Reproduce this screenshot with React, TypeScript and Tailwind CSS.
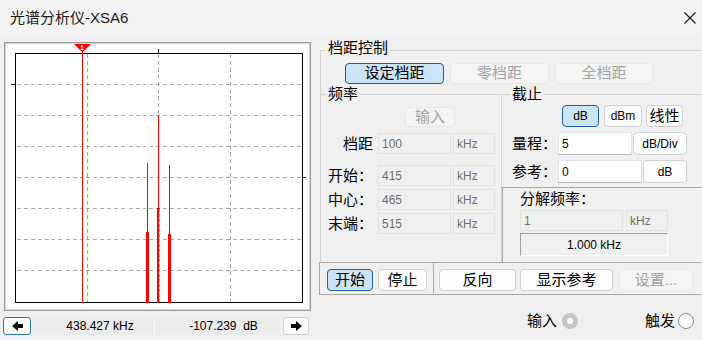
import React from 'react';

const SANS = "font-[family-name:'Liberation_Sans','Noto_Sans_CJK_SC',sans-serif]";

export default function App() {
  return (
    <div className={`w-[702px] h-[340px] bg-[#f0f0f0] flex flex-col overflow-hidden text-black ${SANS}`}>
      {/* Title bar */}
      <div className="h-[36px] bg-[#f3f3f3] flex items-center justify-between pl-[10px] pr-[6px] shrink-0">
        <span className="text-[15px] text-[#1b1b1b]">光谱分析仪-XSA6</span>
        <svg width="12" height="12" viewBox="0 0 12 12">
          <path d="M0.5 0.5 L11.5 11.5 M11.5 0.5 L0.5 11.5" stroke="#1b1b1b" strokeWidth="1.1" />
        </svg>
      </div>

      <div className="flex flex-1">
        {/* Left: plot */}
        <div className="w-[320px] shrink-0 pl-[3px] pt-[6px] flex flex-col">
          <div className="ml-[1px] w-[307px] h-[269px] border border-[#9a9a9a] shadow-[inset_0_0_0_1px_#d6d6d6] bg-white p-[1px]">
            <Plot />
          </div>
          <div className="mt-[6px] flex h-[18px] text-[12px]">
            <div className="w-[28px] h-[18px] border border-[#2f73b5] rounded-[3px] bg-[#fbfbfb] flex items-center justify-center">
              <Arrow dir="left" />
            </div>
            <div className="ml-[1px] w-[123px] pl-[14px] bg-[#ebebeb] border-r border-[#fafafa] flex items-center justify-center">
              438.427 kHz
            </div>
            <div className="w-[125px] pl-[12px] bg-[#ebebeb] flex items-center justify-center whitespace-pre">
              -107.239  dB
            </div>
            <div className="ml-[3px] w-[26px] h-[18px] border border-[#d2d2d2] rounded-[3px] bg-[#fbfbfb] flex items-center justify-center">
              <Arrow dir="right" />
            </div>
          </div>
        </div>

        {/* Right: controls */}
        <div className="flex-1 flex flex-col pt-[14px]">
          <div className="h-[212px] border-t border-l border-[#d5d5d5] flex flex-col">
            <div className="-mt-[13px] ml-[5px] px-[2px] self-start h-[20px] leading-[20px] text-[15px] bg-[#f0f0f0]">档距控制</div>
            <div className="mt-[5px] flex gap-[6px] pl-[24px] text-[15px]">
              <Btn label="设定档距" kind="sel" className="w-[99px] h-[21px]" />
              <Btn label="零档距" kind="dis" className="w-[99px] h-[21px]" />
              <Btn label="全档距" kind="dis" className="w-[98px] h-[21px]" />
            </div>

            <div className="mt-[10px] flex flex-1">
              {/* 频率 */}
              <div className="w-[180px] border-t border-[#d5d5d5] flex flex-col">
                <div className="-mt-[11px] ml-[5px] px-[2px] self-start h-[20px] leading-[20px] text-[15px] bg-[#f0f0f0]">频率</div>
                <Btn label="输入" kind="dis" className="mt-[3px] ml-[84px] w-[50px] h-[20px] text-[15px]" />
                <div className="mt-[6px] flex h-[21px]">
                  <div className="w-[57px] pr-[5px] text-right text-[15px] leading-[21px]">档距</div>
                  <Field value="100" className="w-[73px]" dis />
                  <Field value="kHz" className="ml-[2px] w-[42px]" dis />
                </div>
                <FreqRow label="开始：" value="415" className="mt-[11px]" />
                <FreqRow label="中心：" value="465" className="mt-[3px]" />
                <FreqRow label="末端：" value="515" className="mt-[3px]" />
              </div>

              {/* 截止 */}
              <div className="flex-1 border-t border-l border-[#d5d5d5] flex flex-col">
                <div className="-mt-[11px] ml-[8px] px-[2px] self-start h-[20px] leading-[20px] text-[15px] bg-[#f0f0f0]">截止</div>
                <div className="mt-[1px] pl-[60px] flex">
                  <Btn label="dB" kind="sel" className="w-[37px] h-[22px] text-[12px]" />
                  <Btn label="dBm" className="ml-[5px] w-[38px] h-[22px] text-[12px]" />
                  <Btn label="线性" className="ml-[4px] w-[37px] h-[22px] text-[15px]" />
                </div>
                <div className="mt-[5px] flex h-[23px]">
                  <div className="ml-[10px] w-[46px] text-[15px] leading-[23px]">量程：</div>
                  <Field value="5" className="w-[74px]" />
                  <Btn label="dB/Div" className="ml-[1px] w-[54px] h-[23px] text-[12px] rounded-[2px]" />
                </div>
                <div className="mt-[5px] flex h-[23px]">
                  <div className="ml-[10px] w-[46px] text-[15px] leading-[23px]">参考：</div>
                  <Field value="0" className="w-[84px]" />
                  <Btn label="dB" className="ml-[1px] w-[44px] h-[23px] text-[12px] rounded-[2px]" />
                </div>
                <div className="mt-[4px] flex-1 border-t border-l border-[#a8a8a8] flex flex-col pl-[17px]">
                  <div className="mt-[1px] h-[20px] leading-[20px] text-[15px]">分解频率：</div>
                  <div className="mt-[1px] flex h-[21px]">
                    <Field value="1" className="w-[103px]" dis />
                    <Field value="kHz" className="ml-[3px] w-[42px]" dis />
                  </div>
                  <div className="mt-[2px] w-[148px] h-[23px] border border-t-[#a0a0a0] border-l-[#a0a0a0] border-b-white border-r-white flex items-center justify-center text-[12px]">
                    1.000 kHz
                  </div>
                </div>
              </div>
            </div>
          </div>

          {/* Button strip */}
          <div className="-ml-[1px] h-[33px] border-t border-b border-l border-[#a8a8a8] flex text-[15px]">
            <div className="w-[114px] border-r border-[#a8a8a8] pl-[7px] pt-[6px] flex">
              <Btn label="开始" kind="sel" className="w-[46px] h-[22px]" />
              <Btn label="停止" className="ml-[5px] w-[49px] h-[22px]" />
            </div>
            <div className="pl-[5px] pt-[6px] flex">
              <Btn label="反向" className="w-[77px] h-[22px]" />
              <Btn label="显示参考" className="ml-[4px] w-[93px] h-[22px]" />
              <Btn label="设置..." kind="dis" className="ml-[6px] w-[74px] h-[22px]" />
            </div>
          </div>

          <div className="mt-[18px] h-[16px] flex items-center pl-[207px] text-[15px]">
            <span className="w-[30px] leading-[16px]">输入</span>
            <div className="ml-[5px] w-[16px] h-[16px] rounded-full bg-[#c6c6c6] flex items-center justify-center">
              <div className="w-[6px] h-[6px] rounded-full bg-white" />
            </div>
            <span className="ml-[67px] w-[30px] leading-[16px]">触发</span>
            <div className="ml-[3px] w-[16px] h-[16px] rounded-full border border-[#8a8a8a] bg-white" />
          </div>
        </div>
      </div>
    </div>
  );
}

function FreqRow({ label, value, className = '' }: { label: string; value: string; className?: string }) {
  return (
    <div className={`flex h-[21px] ${className}`}>
      <div className="w-[57px] pl-[7px] text-[15px] leading-[21px]">{label}</div>
      <Field value={value} className="w-[73px]" dis />
      <Field value="kHz" className="ml-[2px] w-[42px]" dis />
    </div>
  );
}

function Field({ value, className = '', dis = false }: { value: string; className?: string; dis?: boolean }) {
  const look = dis
    ? 'bg-[#f0f0f0] border-[#e2e2e2] text-[#6e6e6e]'
    : 'bg-white border-[#e4e4e4] border-b-[#bdbdbd] text-black';
  return (
    <div className={`h-full border ${look} pl-[3px] flex items-center text-[12px] ${className}`}>
      {value}
    </div>
  );
}

function Btn({ label, kind = 'norm', className = '' }: {
  label: string;
  kind?: 'sel' | 'norm' | 'dis';
  className?: string;
}) {
  const look = kind === 'sel'
    ? 'bg-[#cce4f7] border-[#1d5fa0] rounded-[4px]'
    : kind === 'dis'
    ? 'bg-[#f5f5f5] border-[#e8e8e8] text-[#a2a2a2] rounded-[4px]'
    : 'bg-[#fdfdfd] border-[#d0d0d0] rounded-[4px]';
  return (
    <div className={`flex items-center justify-center border shrink-0 ${look} ${className}`}>
      {label}
    </div>
  );
}

function Arrow({ dir }: { dir: 'left' | 'right' }) {
  return (
    <svg width="11" height="10" viewBox="0 0 11 10">
      <path
        d={dir === 'left' ? 'M0 5 L6 0 V3 H11 V7 H6 V10 Z' : 'M11 5 L5 0 V3 H0 V7 H5 V10 Z'}
        fill="#000"
      />
    </svg>
  );
}

function Plot() {
  const L = 9.5, R = 296.5, T = 9.5, B = 258.5;
  const vx = [81.5, 152.5, 224.5];
  const hy = [40.5, 71.5, 102.5, 133.5, 164.5, 195.5, 226.5];
  return (
    <svg width="303" height="265" viewBox="0 0 303 265" shapeRendering="crispEdges">
      {vx.map(x => (
        <line key={x} x1={x} y1={T} x2={x} y2={B} stroke="#a8a8a8" strokeDasharray="4 3" />
      ))}
      {hy.map(y => (
        <line key={y} x1={L + 1} y1={y} x2={R} y2={y} stroke="#a8a8a8" strokeDasharray="4 3" />
      ))}
      <rect x={L} y={T} width={R - L} height={B - T} fill="none" stroke="#000" />
      {/* ticks */}
      <line x1={152.5} y1={5} x2={152.5} y2={T} stroke="#000" />
      <line x1={5} y1={40.5} x2={L} y2={40.5} stroke="#000" />
      <line x1={R} y1={133.5} x2={300} y2={133.5} stroke="#000" />
      {/* signals */}
      <line x1={141.5} y1={119} x2={141.5} y2={B} stroke="#e01010" />
      <rect x={140} y={188} width={3} height={B - 188} fill="#ff0000" />
      <line x1={163.5} y1={121} x2={163.5} y2={B} stroke="#e01010" />
      <rect x={162} y={190} width={3} height={B - 190} fill="#ff0000" />
      <line x1={152.5} y1={71} x2={152.5} y2={B} stroke="#ff0000" />
      <line x1={151.5} y1={164} x2={151.5} y2={B} stroke="#ff0000" />
      <line x1={151} y1={164.5} x2={154} y2={164.5} stroke="#ff0000" />
      <line x1={153.5} y1={165} x2={153.5} y2={B} stroke="#b0b0b0" strokeDasharray="3 2" />
      {/* marker */}
      <line x1={76.5} y1={6} x2={76.5} y2={B} stroke="#ff0000" />
      <polygon points="68,0 85,0 76.5,8.5" fill="#ff0000" shapeRendering="geometricPrecision" />
      <text x={76} y={6.3} fontSize="6.5" fontWeight="bold" fill="#fff" textAnchor="middle" fontFamily="Liberation Sans, sans-serif">1</text>
    </svg>
  );
}
